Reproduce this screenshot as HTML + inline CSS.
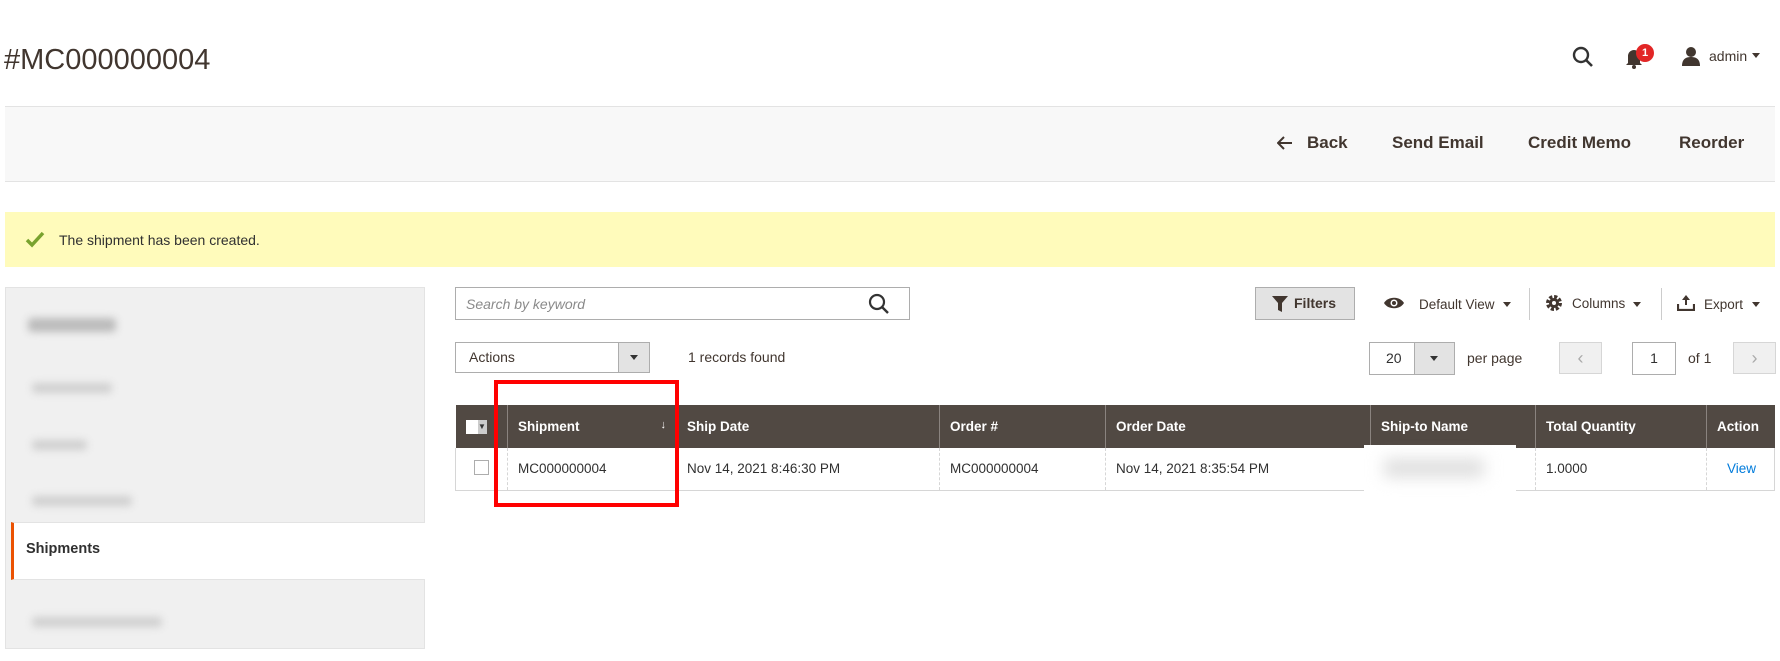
<!DOCTYPE html>
<html><head><meta charset="utf-8"><style>
*{box-sizing:border-box;margin:0;padding:0}
body{width:1780px;height:661px;background:#fff;font-family:"Liberation Sans",sans-serif;color:#303030;position:relative;overflow:hidden}
.a{position:absolute}
.title{left:4px;top:44px;font-size:29px;color:#41362f}
.bar{left:5px;top:106px;width:1770px;height:76px;background:#f8f8f8;border-top:1px solid #e3e3e3;border-bottom:1px solid #e3e3e3}
.btn{top:133px;font-size:17px;font-weight:bold;color:#41362f}
.msg{left:5px;top:212px;width:1770px;height:55px;background:#fffbbb}
.side{left:5px;top:287px;width:420px;height:362px;background:#f0f0f0;border:1px solid #e3e3e3}
.blur{position:absolute;background:#cfcfcf;filter:blur(4px);height:10px;border-radius:4px}
.input{border:1px solid #adadad;background:#fff}
th,td{font-size:13.5px;text-align:left;padding-left:10px}
table{border-collapse:collapse;position:absolute;left:455px;top:405px;width:1320px}
th{background:#514943;color:#fff;height:43px;border-left:1px solid #8a837f;font-weight:bold}
td{height:42px;border-left:1px dashed #d6d6d6;border-bottom:1px solid #d6d6d6;color:#303030}
</style></head><body>
<div class="a title">#MC000000004</div>
<svg class="a" style="left:1572px;top:46px" width="22" height="22" viewBox="0 0 22 22"><circle cx="9" cy="9" r="7" fill="none" stroke="#333" stroke-width="2.4"/><path d="M14 14l6 6" stroke="#333" stroke-width="2.6"/></svg>
<svg class="a" style="left:1625px;top:47px" width="18" height="22" viewBox="0 0 18 22"><path d="M3 16V9a6 6 0 0112 0v7l2 2H1z" fill="#41362f"/><circle cx="9" cy="20" r="2" fill="#41362f"/></svg>
<div class="a" style="left:1636px;top:44px;width:18px;height:18px;border-radius:50%;background:#e22626;color:#fff;font-size:11px;font-weight:bold;text-align:center;line-height:18px">1</div>
<svg class="a" style="left:1682px;top:46px" width="18" height="20" viewBox="0 0 18 20"><circle cx="9" cy="6" r="5" fill="#41362f"/><path d="M0 20c0-7 4-9 9-9s9 2 9 9z" fill="#41362f"/></svg>
<div class="a" style="left:1709px;top:48px;font-size:14px;color:#41362f">admin</div>
<div class="a" style="left:1752px;top:53px;border:4px solid transparent;border-top:5px solid #41362f"></div>
<div class="a bar"></div>
<svg class="a" style="left:1277px;top:136px" width="16" height="14" viewBox="0 0 16 14"><path d="M15 7H2M7 1L1 7l6 6" fill="none" stroke="#41362f" stroke-width="2"/></svg>
<div class="a btn" style="left:1307px">Back</div>
<div class="a btn" style="left:1392px">Send Email</div>
<div class="a btn" style="left:1528px">Credit Memo</div>
<div class="a btn" style="left:1679px">Reorder</div>
<div class="a msg"></div>
<svg class="a" style="left:25px;top:231px" width="20" height="17" viewBox="0 0 20 17"><path d="M2 9l5 5L18 2" fill="none" stroke="#79a22e" stroke-width="3.5"/></svg>
<div class="a" style="left:59px;top:232px;font-size:14px;color:#303030">The shipment has been created.</div>
<div class="a side">
<div class="blur" style="left:22px;top:30px;width:88px;height:14px;background:#bbb"></div>
<div class="blur" style="left:26px;top:95px;width:80px"></div>
<div class="blur" style="left:26px;top:152px;width:55px"></div>
<div class="blur" style="left:26px;top:208px;width:100px"></div>
<div style="position:absolute;left:5px;top:234px;width:414px;height:58px;background:#fff;border-top:1px solid #e3e3e3;border-bottom:1px solid #e3e3e3;border-left:3px solid #eb5202"></div>
<div style="position:absolute;left:20px;top:253px;font-size:14.5px;font-weight:bold;color:#303030">Shipments</div>
<div class="blur" style="left:26px;top:329px;width:130px"></div>
</div>
<div class="a input" style="left:455px;top:287px;width:455px;height:33px"></div>
<div class="a" style="left:466px;top:296px;font-size:14px;font-style:italic;color:#8a8a8a">Search by keyword</div>
<svg class="a" style="left:868px;top:293px" width="22" height="22" viewBox="0 0 22 22"><circle cx="9" cy="9" r="7" fill="none" stroke="#333" stroke-width="2.2"/><path d="M14 14l6 6" stroke="#333" stroke-width="2.4"/></svg>
<div class="a" style="left:1255px;top:287px;width:100px;height:33px;background:#e3e3e3;border:1px solid #adadad"></div>
<svg class="a" style="left:1272px;top:296px" width="16" height="16" viewBox="0 0 16 16"><path d="M0 0h16L10 7v9l-4-2V7z" fill="#41362f"/></svg>
<div class="a" style="left:1294px;top:295px;font-size:14px;font-weight:bold;color:#41362f">Filters</div>
<svg class="a" style="left:1383px;top:296px" width="22" height="14" viewBox="0 0 22 14"><path d="M1 7C5 0 17 0 21 7 17 14 5 14 1 7z" fill="#41362f"/><circle cx="11" cy="7" r="3.5" fill="#fff"/><circle cx="11" cy="7" r="2" fill="#41362f"/></svg>
<div class="a" style="left:1419px;top:297px;font-size:13.5px;color:#41362f">Default View</div>
<div class="a" style="left:1503px;top:302px;border:4px solid transparent;border-top:5px solid #41362f"></div>
<div class="a" style="left:1529px;top:288px;width:1px;height:32px;background:#ccc"></div>
<svg class="a" style="left:1545px;top:294px" width="18" height="18" viewBox="0 0 18 18"><circle cx="9" cy="9" r="6" fill="none" stroke="#41362f" stroke-width="4" stroke-dasharray="3 1.7"/><circle cx="9" cy="9" r="5" fill="#41362f"/><circle cx="9" cy="9" r="2" fill="#fff"/></svg>
<div class="a" style="left:1572px;top:296px;font-size:13.5px;color:#41362f">Columns</div>
<div class="a" style="left:1633px;top:302px;border:4px solid transparent;border-top:5px solid #41362f"></div>
<div class="a" style="left:1661px;top:288px;width:1px;height:32px;background:#ccc"></div>
<svg class="a" style="left:1677px;top:295px" width="18" height="16" viewBox="0 0 18 16"><path d="M9 0l4 5h-3v5H8V5H5z" fill="#41362f"/><path d="M1 9v6h16V9" fill="none" stroke="#41362f" stroke-width="2.2"/></svg>
<div class="a" style="left:1704px;top:297px;font-size:13.5px;color:#41362f">Export</div>
<div class="a" style="left:1752px;top:302px;border:4px solid transparent;border-top:5px solid #41362f"></div>
<div class="a input" style="left:455px;top:342px;width:195px;height:31px"></div>
<div class="a" style="left:618px;top:343px;width:31px;height:29px;background:#e3e3e3;border-left:1px solid #adadad"></div>
<div class="a" style="left:630px;top:355px;border:4px solid transparent;border-top:5px solid #333"></div>
<div class="a" style="left:469px;top:349px;font-size:14px;color:#41362f">Actions</div>
<div class="a" style="left:688px;top:349px;font-size:14px;color:#41362f">1 records found</div>
<div class="a input" style="left:1369px;top:342px;width:86px;height:33px"></div>
<div class="a" style="left:1414px;top:343px;width:40px;height:31px;background:#e3e3e3;border-left:1px solid #adadad"></div>
<div class="a" style="left:1430px;top:356px;border:4px solid transparent;border-top:5px solid #333"></div>
<div class="a" style="left:1386px;top:350px;font-size:14px;color:#303030">20</div>
<div class="a" style="left:1467px;top:350px;font-size:14px;color:#41362f">per page</div>
<div class="a" style="left:1559px;top:342px;width:43px;height:32px;background:#f0f0f0;border:1px solid #d6d6d6;color:#aaa;font-size:18px;text-align:center;line-height:30px">‹</div>
<div class="a input" style="left:1632px;top:342px;width:44px;height:33px;text-align:center;line-height:31px;font-size:14px">1</div>
<div class="a" style="left:1688px;top:350px;font-size:14px;color:#41362f">of 1</div>
<div class="a" style="left:1733px;top:342px;width:43px;height:32px;background:#f0f0f0;border:1px solid #d6d6d6;color:#aaa;font-size:18px;text-align:center;line-height:30px">›</div>
<table>
<tr><th style="width:52px;border-left:none"><span style="display:inline-block;width:12px;height:14px;background:#fff;vertical-align:middle"></span><span style="display:inline-block;width:9px;height:14px;background:#ccc;vertical-align:middle;color:#333;font-size:8px;line-height:14px;text-align:center">▼</span></th><th style="width:169px">Shipment<span style="float:right;margin-right:10px;font-weight:normal;font-size:11px">↓</span></th><th style="width:263px">Ship Date</th><th style="width:166px">Order #</th><th style="width:265px">Order Date</th><th style="width:165px">Ship-to Name</th><th style="width:171px">Total Quantity</th><th>Action</th></tr>
<tr><td style="border-left:1px solid #d6d6d6"><span style="display:inline-block;width:15px;height:15px;border:1px solid #adadad;background:#fff;margin-left:8px"></span></td><td>MC000000004</td><td>Nov 14, 2021 8:46:30 PM</td><td>MC000000004</td><td>Nov 14, 2021 8:35:54 PM</td><td></td><td>1.0000</td><td style="border-right:1px solid #d6d6d6"><span style="color:#007bdb;margin-left:10px">View</span></td></tr>
</table>
<div class="a" style="left:1364px;top:445px;width:152px;height:46px;background:#fff"><div style="position:absolute;left:20px;top:14px;width:100px;height:18px;background:#ddd;filter:blur(8px)"></div></div>
<div class="a" style="left:494px;top:380px;width:185px;height:127px;border:4px solid #f00"></div>
</body></html>
